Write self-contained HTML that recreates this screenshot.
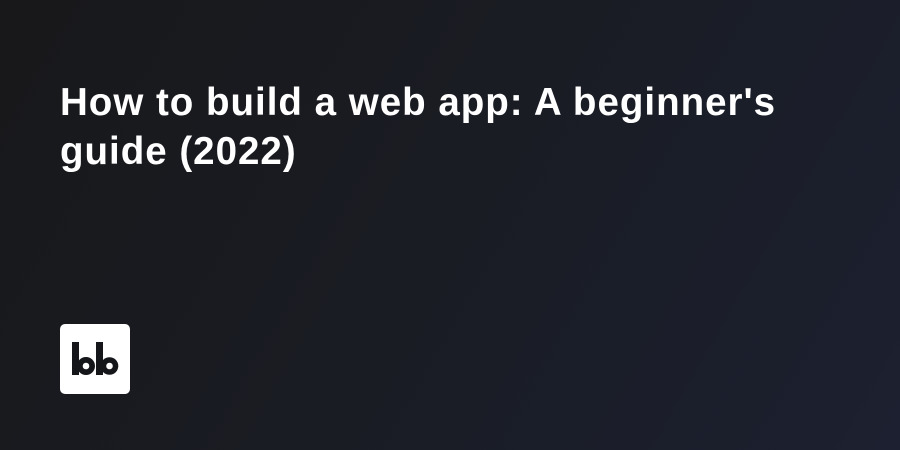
<!DOCTYPE html>
<html><head><style>
html,body{margin:0;padding:0}
body{width:900px;height:450px;overflow:hidden;background:linear-gradient(120deg,#18181a 0%,#1a1d26 60%,#1c2030 100%);position:relative;font-family:"Liberation Sans",sans-serif}
h1{position:absolute;left:60px;top:78px;margin:0;width:780px;color:#fff;font-size:38.5px;line-height:49px;font-weight:bold;letter-spacing:1px}
.logo{position:absolute;left:60px;top:324px;width:70px;height:70px;background:#fff;border-radius:5px}
</style></head><body>
<h1>How to build a web app: A beginner's guide (2022)</h1>
<div class="logo"><svg width="70" height="70" viewBox="0 0 70 70">
<g fill="#15161a">
<rect x="12" y="18" width="7" height="33"/>
<circle cx="26" cy="42" r="9"/>
<rect x="36" y="18" width="7" height="33"/>
<circle cx="49.5" cy="42" r="8.8"/>
</g>
<g fill="#fff"><circle cx="26" cy="42" r="3.3"/><circle cx="49.5" cy="42" r="3.3"/></g>
</svg></div>
</body></html>
